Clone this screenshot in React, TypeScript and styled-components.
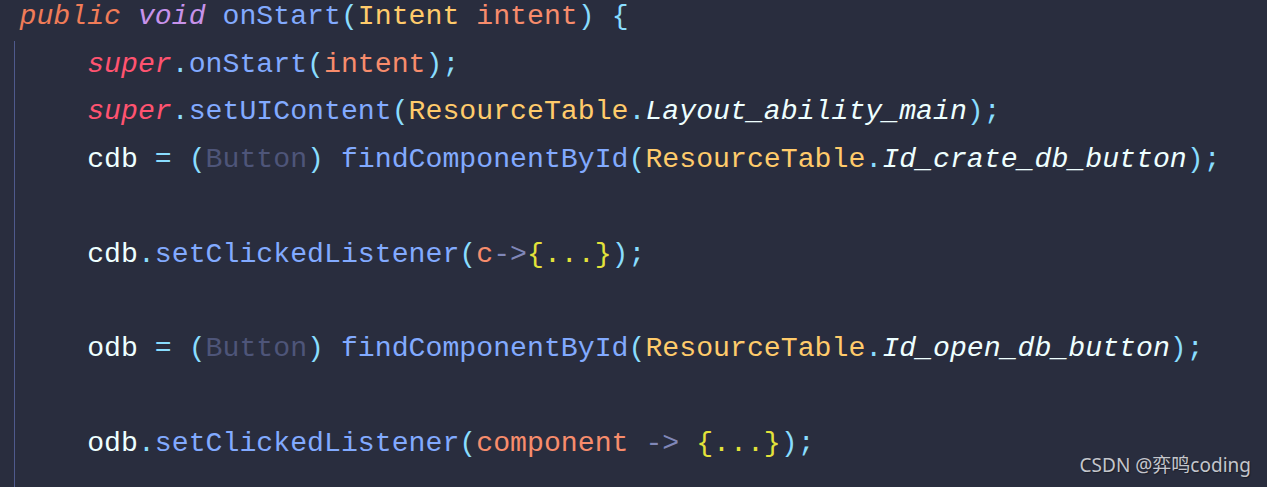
import React from "react";
import styled, { createGlobalStyle } from "styled-components";

const GlobalStyle = createGlobalStyle`
  html, body {
    margin: 0;
    padding: 0;
    background: #292d3e;
    overflow: hidden;
  }
`;

const Editor = styled.div`
  position: relative;
  width: 1267px;
  height: 487px;
  background: #292d3e;
  overflow: hidden;
  font-family: "Courier New", "Nimbus Mono PS", "Nimbus Mono L", "FreeMono", "Courier 10 Pitch", "Courier", "Liberation Mono", monospace;
  font-size: 28.2px;
  line-height: 47.44px;
`;

const Code = styled.div`
  margin-top: -6.7px;
  padding-left: 19.5px;
`;

const Body = styled.div`
  margin-left: -5.5px;
  padding-left: 4.5px;
  border-left: 1px solid #4f5a8c;
  min-height: 460px;
`;

const Line = styled.div`
  white-space: pre;
  height: 47.44px;
`;

const T = styled.span<{ $c: string; $i?: boolean }>`
  color: ${(p) => p.$c};
  font-style: ${(p) => (p.$i ? "italic" : "normal")};
`;

const Watermark = styled.div`
  position: absolute;
  right: 16px;
  bottom: -2px;
  font-family: "Noto Sans", "Noto Sans CJK SC", sans-serif;
  font-size: 19px;
  color: #c4c6cc;
  text-shadow: 1px 1px 1px rgba(0, 0, 0, 0.35);
`;

const C = {
  kw: "#f07c58",
  purple: "#c792ea",
  fn: "#82aaff",
  punc: "#89ddff",
  type: "#ffcb6b",
  param: "#f78c6c",
  sup: "#ff5370",
  plain: "#eeffff",
  dim: "#4e5579",
  arrow: "#8087b8",
  fold: "#e3e23a",
};

type Tok = [string, string, boolean?];

const lines: Tok[][] = [
  [
    ["public", C.kw, true],
    [" ", C.plain],
    ["void", C.purple, true],
    [" ", C.plain],
    ["onStart", C.fn],
    ["(", C.punc],
    ["Intent", C.type],
    [" ", C.plain],
    ["intent", C.param],
    [")", C.punc],
    [" ", C.plain],
    ["{", C.punc],
  ],
];

const body: Tok[][] = [
  [
    ["    ", C.plain],
    ["super", C.sup, true],
    [".", C.punc],
    ["onStart", C.fn],
    ["(", C.punc],
    ["intent", C.param],
    [")", C.punc],
    [";", C.punc],
  ],
  [
    ["    ", C.plain],
    ["super", C.sup, true],
    [".", C.punc],
    ["setUIContent", C.fn],
    ["(", C.punc],
    ["ResourceTable", C.type],
    [".", C.punc],
    ["Layout_ability_main", C.plain, true],
    [")", C.punc],
    [";", C.punc],
  ],
  [
    ["    ", C.plain],
    ["cdb", C.plain],
    [" ", C.plain],
    ["=", C.punc],
    [" ", C.plain],
    ["(", C.punc],
    ["Button", C.dim],
    [")", C.punc],
    [" ", C.plain],
    ["findComponentById", C.fn],
    ["(", C.punc],
    ["ResourceTable", C.type],
    [".", C.punc],
    ["Id_crate_db_button", C.plain, true],
    [")", C.punc],
    [";", C.punc],
  ],
  [],
  [
    ["    ", C.plain],
    ["cdb", C.plain],
    [".", C.punc],
    ["setClickedListener", C.fn],
    ["(", C.punc],
    ["c", C.param],
    ["->", C.arrow],
    ["{...}", C.fold],
    [")", C.punc],
    [";", C.punc],
  ],
  [],
  [
    ["    ", C.plain],
    ["odb", C.plain],
    [" ", C.plain],
    ["=", C.punc],
    [" ", C.plain],
    ["(", C.punc],
    ["Button", C.dim],
    [")", C.punc],
    [" ", C.plain],
    ["findComponentById", C.fn],
    ["(", C.punc],
    ["ResourceTable", C.type],
    [".", C.punc],
    ["Id_open_db_button", C.plain, true],
    [")", C.punc],
    [";", C.punc],
  ],
  [],
  [
    ["    ", C.plain],
    ["odb", C.plain],
    [".", C.punc],
    ["setClickedListener", C.fn],
    ["(", C.punc],
    ["component", C.param],
    [" ", C.plain],
    ["->", C.arrow],
    [" ", C.plain],
    ["{...}", C.fold],
    [")", C.punc],
    [";", C.punc],
  ],
];

const renderLine = (toks: Tok[], key: number) => (
  <Line key={key}>
    {toks.length === 0
      ? " "
      : toks.map(([text, color, italic], i) => (
          <T key={i} $c={color} $i={italic}>
            {text}
          </T>
        ))}
  </Line>
);

export default function App() {
  return (
    <>
      <GlobalStyle />
      <Editor>
        <Code>
          {lines.map(renderLine)}
          <Body>{body.map(renderLine)}</Body>
        </Code>
        <Watermark>CSDN @弈鸣coding</Watermark>
      </Editor>
    </>
  );
}
